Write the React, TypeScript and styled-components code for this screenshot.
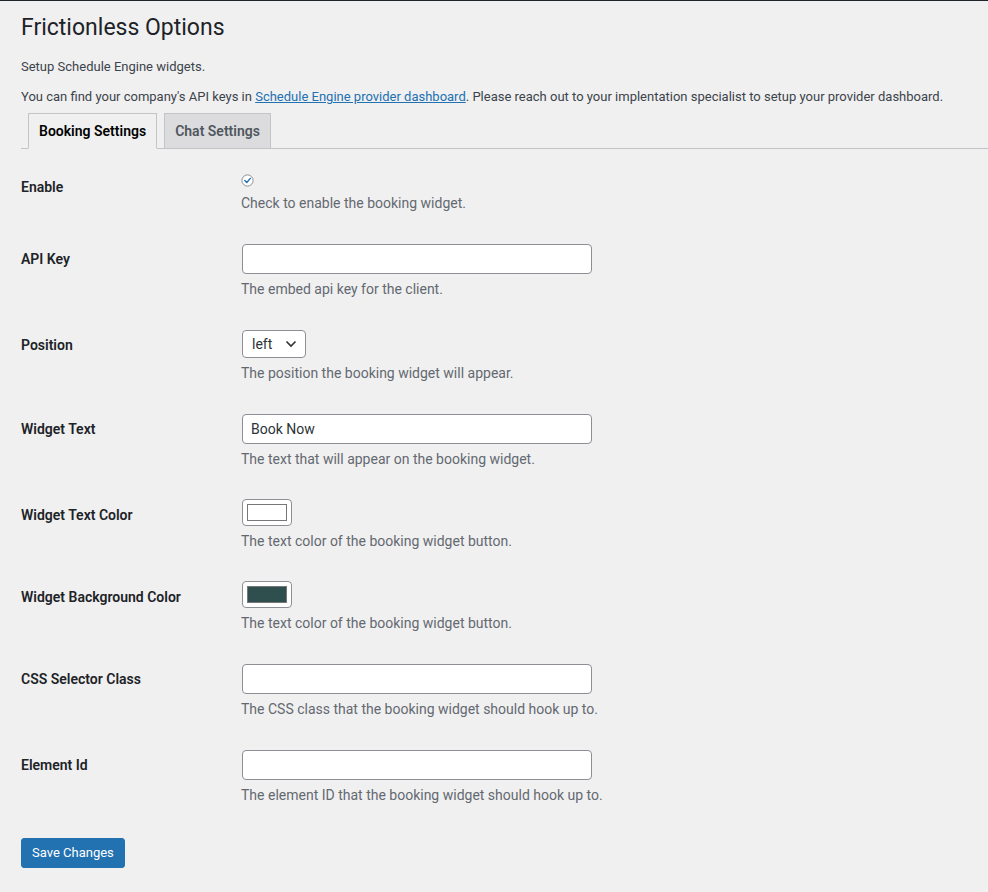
import React, { useState } from 'react';
import styled, { createGlobalStyle } from 'styled-components';

const GlobalStyle = createGlobalStyle`
  html, body {
    margin: 0;
    padding: 0;
    background: #f0f0f1;
  }
  body {
    font-family: Roboto, "Liberation Sans", sans-serif;
    color: #3c434a;
    font-size: 13px;
  }
  * {
    box-sizing: border-box;
  }
`;

const Page = styled.div`
  min-height: 100vh;
  border-top: 1px solid #1d2327;
  padding: 0 0 24px 21px;
`;

const Title = styled.h1`
  margin: 0 0 14px;
  padding-top: 12px;
  font-size: 23px;
  font-weight: 400;
  line-height: 30px;
  color: #1d2327;
`;

const Intro = styled.div`
  display: flex;
  flex-direction: column;
  gap: 11px;
`;

const Text = styled.p`
  margin: 0;
  font-size: 13px;
  line-height: 19px;
  color: #3c434a;
`;

const Link = styled.a`
  color: #2271b1;
  text-decoration: underline;
`;

const TabBar = styled.nav`
  display: flex;
  margin-top: 7px;
  border-bottom: 1px solid #c3c4c7;
`;

const Tab = styled.button<{ $active?: boolean }>`
  margin: 0 0 -1px 7px;
  padding: 5px 10px;
  font-family: inherit;
  font-size: 14px;
  font-weight: 600;
  line-height: 24px;
  border: 1px solid #c3c4c7;
  border-bottom-color: ${(p) => (p.$active ? '#f0f0f1' : '#c3c4c7')};
  background: ${(p) => (p.$active ? '#f0f0f1' : '#dcdcde')};
  color: ${(p) => (p.$active ? '#000' : '#50575e')};
  cursor: pointer;
`;

const Form = styled.div`
  margin-top: 8px;
`;

const Row = styled.div`
  display: grid;
  grid-template-columns: 210px 1fr;
`;

const Label = styled.label`
  padding: 21px 0 19px;
  font-size: 14px;
  font-weight: 600;
  line-height: 18px;
  color: #1d2327;
`;

const Field = styled.div`
  padding: 15px 10px;
`;

const Description = styled.p`
  margin: 4px 0 0;
  font-size: 14px;
  line-height: 22px;
  color: #646970;
`;

const CheckWrap = styled.div`
  height: 16px;
  display: flex;
  align-items: center;
`;

const TextInput = styled.input`
  display: block;
  width: 350px;
  height: 30px;
  margin-left: 1px;
  padding: 0 8px;
  font-family: inherit;
  font-size: 14px;
  color: #2c3338;
  background: #fff;
  border: 1px solid #8c8f94;
  border-radius: 4px;
  outline: none;
`;

const SelectWrap = styled.div`
  position: relative;
  width: 64px;
  margin-left: 1px;
`;

const Select = styled.select`
  display: block;
  width: 64px;
  height: 28px;
  padding: 0 24px 0 9px;
  font-family: inherit;
  font-size: 14px;
  color: #2c3338;
  background: #fff;
  border: 1px solid #8c8f94;
  border-radius: 4px;
  appearance: none;
  outline: none;
`;

const Chevron = styled.svg`
  position: absolute;
  right: 9px;
  top: 10px;
  pointer-events: none;
`;

const ColorButton = styled.button`
  display: flex;
  align-items: center;
  justify-content: center;
  width: 50px;
  height: 27px;
  margin: -1px 0 0 1px;
  padding: 0;
  background: #fff;
  border: 1px solid #8c8f94;
  border-radius: 4px;
  cursor: pointer;
`;

const Swatch = styled.span<{ $color: string }>`
  display: block;
  width: 40px;
  height: 17px;
  background: ${(p) => p.$color};
  border: 1px solid #777;
`;

const SaveButton = styled.button`
  margin-top: 17px;
  height: 30px;
  padding: 0 10px;
  font-family: inherit;
  font-size: 13px;
  line-height: 28px;
  color: #fff;
  background: #2271b1;
  border: 1px solid #2271b1;
  border-radius: 3px;
  cursor: pointer;
`;

const CheckIcon = () => (
  <svg width="13" height="13" viewBox="0 0 13 13">
    <circle cx="6.5" cy="6.5" r="5.6" fill="#fff" stroke="#8c8f94" strokeWidth="1" />
    <path d="M3.8 6.6 L5.8 8.5 L9.3 4.4" fill="none" stroke="#2271b1" strokeWidth="1.4" strokeLinecap="round" strokeLinejoin="round" />
  </svg>
);

const App = () => {
  const [tab, setTab] = useState('booking');
  const [widgetText, setWidgetText] = useState('Book Now');

  return (
    <Page>
      <GlobalStyle />
      <Title>Frictionless Options</Title>
      <Intro>
        <Text>Setup Schedule Engine widgets.</Text>
        <Text>
          You can find your company's API keys in <Link href="#">Schedule Engine provider dashboard</Link>. Please
          reach out to your implentation specialist to setup your provider dashboard.
        </Text>
      </Intro>

      <TabBar>
        <Tab $active={tab === 'booking'} onClick={() => setTab('booking')}>
          Booking Settings
        </Tab>
        <Tab $active={tab === 'chat'} onClick={() => setTab('chat')}>
          Chat Settings
        </Tab>
      </TabBar>

      <Form>
        <Row>
          <Label>Enable</Label>
          <Field>
            <CheckWrap>
              <CheckIcon />
            </CheckWrap>
            <Description>Check to enable the booking widget.</Description>
          </Field>
        </Row>

        <Row>
          <Label>API Key</Label>
          <Field>
            <TextInput type="text" />
            <Description>The embed api key for the client.</Description>
          </Field>
        </Row>

        <Row>
          <Label>Position</Label>
          <Field>
            <SelectWrap>
              <Select defaultValue="left">
                <option value="left">left</option>
                <option value="right">right</option>
              </Select>
              <Chevron width="12" height="8" viewBox="0 0 12 8">
                <path d="M1.5 1.5 L6 6 L10.5 1.5" fill="none" stroke="#2c3338" strokeWidth="1.6" />
              </Chevron>
            </SelectWrap>
            <Description>The position the booking widget will appear.</Description>
          </Field>
        </Row>

        <Row>
          <Label>Widget Text</Label>
          <Field>
            <TextInput type="text" value={widgetText} onChange={(e) => setWidgetText(e.target.value)} />
            <Description>The text that will appear on the booking widget.</Description>
          </Field>
        </Row>

        <Row>
          <Label>Widget Text Color</Label>
          <Field>
            <ColorButton type="button">
              <Swatch $color="#ffffff" />
            </ColorButton>
            <Description>The text color of the booking widget button.</Description>
          </Field>
        </Row>

        <Row>
          <Label>Widget Background Color</Label>
          <Field>
            <ColorButton type="button">
              <Swatch $color="#2f4f4f" />
            </ColorButton>
            <Description>The text color of the booking widget button.</Description>
          </Field>
        </Row>

        <Row>
          <Label>CSS Selector Class</Label>
          <Field>
            <TextInput type="text" />
            <Description>The CSS class that the booking widget should hook up to.</Description>
          </Field>
        </Row>

        <Row>
          <Label>Element Id</Label>
          <Field>
            <TextInput type="text" />
            <Description>The element ID that the booking widget should hook up to.</Description>
          </Field>
        </Row>
      </Form>

      <SaveButton type="button">Save Changes</SaveButton>
    </Page>
  );
};

export default App;
